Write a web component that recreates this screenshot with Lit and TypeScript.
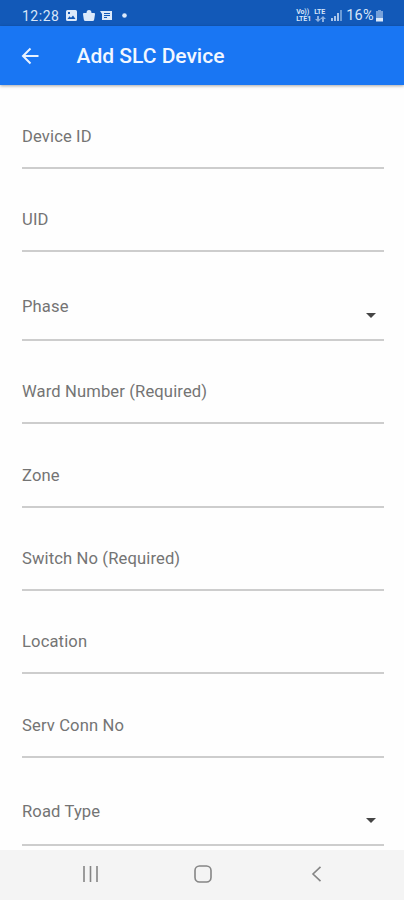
import { LitElement, html, css, svg } from "lit";
import { customElement, property } from "lit/decorators.js";

@customElement("form-field")
class FormField extends LitElement {
  @property() label = "";
  @property({ type: Boolean, reflect: true }) select = false;

  static styles = css`
    :host {
      display: flex;
      flex: none;
      box-sizing: border-box;
      height: 83.3px;
      align-items: flex-end;
      justify-content: space-between;
      border-bottom: 2px solid #cdcdcd;
      padding-bottom: 20px;
    }
    :host([select]) {
      height: 88.8px;
      padding-bottom: 22.5px;
    }
    .label {
      font-size: 16.6px;
      line-height: 20px;
      letter-spacing: 0.12px;
      color: #747474;
      white-space: nowrap;
    }
    .caret {
      display: block;
      width: 10px;
      height: 5px;
      margin: 0 8px -1px 0;
      fill: #454545;
    }
  `;

  render() {
    return html`<span class="label">${this.label}</span>
      ${this.select
        ? html`<svg class="caret" viewBox="0 0 10 5"><path d="M0 0h10L5 5z" /></svg>`
        : null}`;
  }
}

const fields: { label: string; select?: boolean }[] = [
  { label: "Device ID" },
  { label: "UID" },
  { label: "Phase", select: true },
  { label: "Ward Number (Required)" },
  { label: "Zone" },
  { label: "Switch No (Required)" },
  { label: "Location" },
  { label: "Serv Conn No" },
  { label: "Road Type", select: true },
];

const signalBars = [3, 5, 8, 11].map(
  (h, i) => svg`<rect x=${i * 3} y=${11 - h} width="2" height=${h} opacity=${i < 3 ? 0.75 : 0.45} />`
);

@customElement("app-root")
class AppRoot extends LitElement {
  static styles = css`
    :host {
      display: flex;
      flex-direction: column;
      width: 100%;
      height: 900px;
      overflow: hidden;
      background: #fefefe;
      font-family: Roboto, "Liberation Sans", sans-serif;
    }
    svg {
      display: block;
      flex: none;
    }
    .status {
      display: flex;
      flex: none;
      box-sizing: border-box;
      height: 26px;
      padding: 5px 20px 0 22px;
      justify-content: space-between;
      align-items: center;
      background: #1259b8;
      color: #d8e6f8;
      fill: #dceafb;
    }
    .group {
      display: flex;
      align-items: center;
    }
    .clock {
      width: 43px;
      font-size: 14px;
      letter-spacing: 0.5px;
      line-height: 20px;
    }
    .volte {
      display: flex;
      flex-direction: column;
      width: 18px;
      font-size: 7px;
      font-weight: 700;
      line-height: 6.5px;
      letter-spacing: -0.1px;
    }
    .lte {
      width: 17px;
    }
    .arrows {
      margin-left: 1px;
      opacity: 0.6;
    }
    .percent {
      margin: 0 1px 0 3px;
      font-size: 14.5px;
      letter-spacing: 0.3px;
      line-height: 20px;
    }
    .bar {
      display: flex;
      flex: none;
      height: 59px;
      align-items: center;
      padding-left: 21px;
      background: #1976f3;
      box-shadow: 0 1px 3px rgba(0, 0, 0, 0.35);
      z-index: 1;
    }
    .title {
      margin: 0 0 0 37.5px;
      color: #f2f7ff;
      font-size: 21px;
      font-weight: 500;
      line-height: 28px;
    }
    .form {
      display: flex;
      flex: 1;
      min-height: 0;
      flex-direction: column;
      padding: 0.7px 20px 0 22px;
      overflow: hidden;
    }
    .nav {
      display: flex;
      flex: none;
      height: 50px;
      align-items: center;
      box-sizing: border-box;
      padding: 0 0 2px 82px;
      background: #f4f4f4;
      fill: none;
      stroke: #858585;
      stroke-width: 1.6;
    }
    .home {
      margin: 0 99px 0 95px;
    }
  `;

  render() {
    return html`
      <div class="status">
        <div class="group">
          <span class="clock">12:28</span>
          <svg width="63" height="12" viewBox="0 0 63 12">
            <path fill-rule="evenodd" d="M2.500 0h8Q12 0 12 1.500v8Q12 11 10.500 11h-8Q1 11 1 9.500v-8Q1 0 2.500 0zM2.500 9h8L8 5.500 6 7.800 4.500 6.200zM3 2v2h2V2z" />
            <path d="M19 3h2.500q0-3 2.500-3t2.500 3H29q1.200 0 1 1.300L29.200 9.500Q29 11 27.500 11h-7Q19 11 18.800 9.500L18 4.300Q17.800 3 19 3z" />
            <path fill-rule="evenodd" d="M35 1h12v9H37V4zM39 3v1h6V3zM39 5v1h6V5zM39 7v1h3V7z" />
            <circle cx="59.500" cy="5.500" r="2.300" />
          </svg>
        </div>
        <div class="group">
          <div class="volte"><span>Vo))</span><span>LTE1</span></div>
          <div class="volte lte">
            <span>LTE</span>
            <svg class="arrows" width="11" height="6" viewBox="0 0 11 6">
              <path d="M2 0h2v3h2L3 6 0 3h2zM7 6h2V3h2L8 0 5 3h2z" />
            </svg>
          </div>
          <svg width="12" height="11" viewBox="0 0 12 11">${signalBars}</svg>
          <span class="percent">16%</span>
          <svg width="9" height="12" viewBox="0 0 9 12">
            <path opacity=".5" d="M3 0h3v1h2v8H1V1h2z" />
            <path d="M1 8h7v3.500H1z" />
          </svg>
        </div>
      </div>
      <header class="bar">
        <svg width="18" height="18" viewBox="0 0 18 18" fill="none" stroke="#e8f2ff" stroke-width="2">
          <path d="M17.500 9H2M9.500 1.500L2 9l7.500 7.500" />
        </svg>
        <h1 class="title">Add SLC Device</h1>
      </header>
      <main class="form">
        ${fields.map((f) => html`<form-field .label=${f.label} ?select=${!!f.select}></form-field>`)}
      </main>
      <nav class="nav">
        <svg width="17" height="16" viewBox="0 0 17 16"><path d="M2 0v16M8.500 0v16M15 0v16" /></svg>
        <svg class="home" width="18" height="18" viewBox="0 0 18 18"><rect x="1" y="1" width="16" height="16" rx="4.500" /></svg>
        <svg width="11" height="16" viewBox="0 0 11 16"><path d="M9.500 .8L2 8l7.500 7.200" /></svg>
      </nav>
    `;
  }
}
